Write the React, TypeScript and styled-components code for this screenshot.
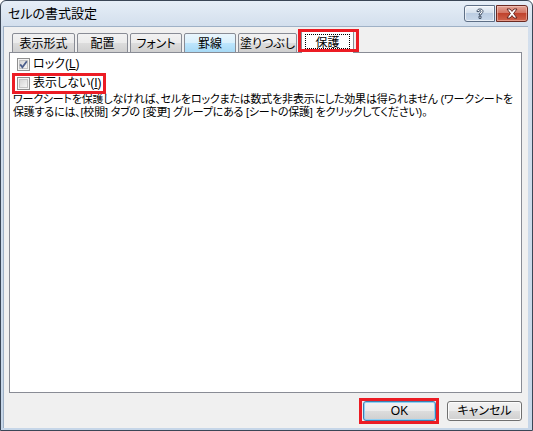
import * as React from "react"
import styled, { createGlobalStyle } from "styled-components"

const GlobalStyle = createGlobalStyle`
  html, body {
    margin: 0;
    padding: 0;
    background: #ffffff;
  }
  body {
    font-family: "Liberation Sans", "Noto Sans CJK JP", sans-serif;
    font-size: 12px;
    color: #000;
    font-feature-settings: "palt";
  }
`

interface ITab {
  label: string
  w: number
  hover?: boolean
  active?: boolean
}

const tabs: ITab[] = [
  { label: "表示形式", w: 63 },
  { label: "配置", w: 51 },
  { label: "フォント", w: 52 },
  { label: "罫線", w: 52, hover: true },
  { label: "塗りつぶし", w: 59 },
  { label: "保護", w: 53, active: true },
]

const CheckIcon = ({ checked }: { checked: boolean }) => (
  <svg width="13" height="13" viewBox="0 0 13 13">
    <defs>
      <linearGradient id="cbFill" x1="0" y1="0" x2="1" y2="1">
        <stop offset="0" stopColor="#d4d4d4" />
        <stop offset="1" stopColor="#f7f7f7" />
      </linearGradient>
    </defs>
    <rect x="0.5" y="0.5" width="12" height="12" fill="#f4f4f4" stroke="#8f8f8f" />
    <rect x="2.5" y="2.5" width="8" height="8" fill="url(#cbFill)" stroke="#c4c4c4" />
    {checked && (
      <path d="M3.2 6.4 L5.4 9.2 L9.8 3.2" fill="none" stroke="#4c5f8c" strokeWidth="1.8" />
    )}
  </svg>
)

const App: React.FunctionComponent = () => {
  return (
    <>
      <GlobalStyle />
      <Window>
        <TitleBar>
          <Title>セルの書式設定</Title>
          <Controls>
            <HelpButton>
              <svg width="10" height="12" viewBox="0 0 10 12">
                <path
                  d="M2 3.6 C2 1.6 3.4 1 5 1 C6.8 1 8 2 8 3.4 C8 5 6 5.4 6 7 L4 7 C4 5 6 4.6 6 3.5 C6 2.8 5.6 2.5 5 2.5 C4.3 2.5 4 3 4 3.6 Z M4 8.2 L6 8.2 L6 10.4 L4 10.4 Z"
                  fill="#ffffff"
                  stroke="#2c3e57"
                  strokeWidth="0.9"
                />
              </svg>
            </HelpButton>
            <CloseButton>
              <svg width="14" height="11" viewBox="0 0 14 11">
                <path
                  d="M2 1 L5 1 L7 3.4 L9 1 L12 1 L8.6 5.5 L12 10 L9 10 L7 7.6 L5 10 L2 10 L5.4 5.5 Z"
                  fill="#ffffff"
                  stroke="#5a1c16"
                  strokeWidth="0.9"
                />
              </svg>
            </CloseButton>
          </Controls>
        </TitleBar>
        <Client>
          <TabStrip>
            {tabs.map((t) => (
              <Tab key={t.label} $w={t.w} $hover={t.hover} $active={t.active}>
                {t.active ? <FocusLabel>{t.label}</FocusLabel> : t.label}
                {t.active && <Marker $l={-4} $r={-6} $t={-2} $b={1} />}
              </Tab>
            ))}
          </TabStrip>
          <Panel>
            <CheckRow>
              <CheckLabel>
                <CheckIcon checked />
                <span>
                  ロック(<u>L</u>)
                </span>
              </CheckLabel>
            </CheckRow>
            <CheckRow>
              <CheckLabel>
                <CheckIcon checked={false} />
                <span>
                  表示しない(<u>I</u>)
                </span>
                <Marker $l={-3} $r={-2} $t={-3} $b={-3} />
              </CheckLabel>
            </CheckRow>
            <Note>
              ワークシートを保護しなければ、セルをロックまたは数式を非表示にした効果は得られません (ワークシートを
              <br />
              保護するには、[校閲] タブの [変更] グループにある [シートの保護] をクリックしてください)。
            </Note>
          </Panel>
          <Footer>
            <Button $w={73} $default>
              OK
              <Marker $l={-5} $r={-4} $t={-4} $b={-4} />
            </Button>
            <Button $w={75}>キャンセル</Button>
          </Footer>
        </Client>
      </Window>
    </>
  )
}

const Window = styled.div`
  box-sizing: border-box;
  width: 533px;
  height: 431px;
  display: flex;
  flex-direction: column;
  border: 1px solid #3a4656;
  border-radius: 6px 6px 0 0;
  background: linear-gradient(#e6eef7, #d3dfed 25px, #c6d6e8);
  padding: 0 4px 2px 2px;
  overflow: hidden;
`

const TitleBar = styled.div`
  height: 25px;
  display: flex;
  align-items: flex-start;
  padding: 0 0 0 5px;
  flex-shrink: 0;
`

const Title = styled.div`
  font-family: "Noto Sans CJK JP", sans-serif;
  font-size: 13px;
  line-height: 24px;
  color: #000;
`

const Controls = styled.div`
  margin-left: auto;
  margin-top: 4px;
  display: flex;
  gap: 1px;
`

const HelpButton = styled.div`
  box-sizing: border-box;
  width: 31px;
  height: 17px;
  border: 1px solid #5e6f86;
  border-radius: 3px 0 0 3px;
  background: linear-gradient(#eef3f9, #d3dfec 50%, #bccde2 50%, #c9d8ea);
  box-shadow: inset 0 0 0 1px rgba(255, 255, 255, 0.6);
  display: flex;
  align-items: center;
  justify-content: center;
`

const CloseButton = styled.div`
  box-sizing: border-box;
  width: 32px;
  height: 17px;
  border: 1px solid #6b2a22;
  border-radius: 0 3px 3px 0;
  background: linear-gradient(#e3a597, #d2705e 50%, #c0432d 50%, #d0644c);
  box-shadow: inset 0 0 0 1px rgba(255, 220, 210, 0.45);
  display: flex;
  align-items: center;
  justify-content: center;
`

const Client = styled.div`
  flex: 1;
  display: flex;
  flex-direction: column;
  background: #f0f0f0;
  border-left: 1px solid #9fb1c6;
  border-top: 1px solid #9fb1c6;
  padding: 3px 6px 0 5px;
  min-height: 0;
`

const TabStrip = styled.div`
  height: 22px;
  display: flex;
  align-items: flex-end;
  gap: 2px;
  padding-left: 3px;
  position: relative;
  z-index: 1;
`

const Tab = styled.div<{ $w: number; $hover?: boolean; $active?: boolean }>`
  position: relative;
  box-sizing: border-box;
  width: ${(p) => p.$w}px;
  height: ${(p) => (p.$active ? 23 : 20)}px;
  margin-bottom: -1px;
  margin-left: ${(p) => (p.$active ? 2 : 0)}px;
  border: 1px solid #898c95;
  border-bottom: ${(p) => (p.$active ? "none" : "1px solid #898c95")};
  border-radius: 2px 2px 0 0;
  background: ${(p) =>
    p.$active
      ? "#ffffff"
      : p.$hover
      ? "linear-gradient(#eaf6fd, #d9f0fc 50%, #bee6fd 50%, #a7d9f5)"
      : "linear-gradient(#f2f2f2, #ebebeb 50%, #dddddd 50%, #cfcfcf)"};
  display: flex;
  align-items: center;
  justify-content: center;
  padding: ${(p) => (p.$active ? "3px 3px 4px 3px" : "0 0 1px 0")};
  font-family: "Noto Sans CJK JP", sans-serif;
  font-size: 12px;
  line-height: 14px;
`

const FocusLabel = styled.span`
  flex: 1;
  align-self: stretch;
  border: 1px dotted #000;
  display: flex;
  align-items: center;
  justify-content: center;
`

const Marker = styled.span<{ $l: number; $r: number; $t: number; $b: number }>`
  position: absolute;
  left: ${(p) => p.$l}px;
  right: ${(p) => p.$r}px;
  top: ${(p) => p.$t}px;
  bottom: ${(p) => p.$b}px;
  border: 3px solid #ec1c24;
  pointer-events: none;
`

const Panel = styled.div`
  flex: 1;
  background: #ffffff;
  border: 1px solid #898c95;
  padding: 2px 0 0 2px;
  display: flex;
  flex-direction: column;
  align-items: flex-start;
`

const CheckRow = styled.div`
  height: 19px;
  display: flex;
  align-items: center;
  padding-left: 3px;
`

const CheckLabel = styled.label`
  position: relative;
  display: inline-flex;
  align-items: center;
  gap: 3px;
  padding: 1px 2px;
  font-family: "Liberation Sans", "Noto Sans CJK JP", sans-serif;
  font-size: 12px;
  line-height: 13px;

  svg {
    display: block;
  }

  u {
    text-underline-offset: 1px;
  }
`

const Note = styled.div`
  font-family: "Liberation Sans", "Noto Sans CJK JP", sans-serif;
  font-size: 11px;
  letter-spacing: -0.2px;
  line-height: 13px;
  white-space: nowrap;
  padding-left: 1px;
`

const Footer = styled.div`
  height: 35px;
  box-sizing: border-box;
  display: flex;
  justify-content: flex-end;
  align-items: flex-start;
  gap: 11px;
  padding-top: 8px;
  flex-shrink: 0;
`

const Button = styled.div<{ $w: number; $default?: boolean }>`
  position: relative;
  box-sizing: border-box;
  width: ${(p) => p.$w}px;
  height: 20px;
  border: 1px solid ${(p) => (p.$default ? "#3c7fb1" : "#707070")};
  border-radius: 3px;
  background: linear-gradient(#f2f2f2, #ebebeb 50%, #dddddd 50%, #cfcfcf);
  box-shadow: inset 0 0 0 1px ${(p) => (p.$default ? "#8fd0f4" : "#fcfcfc")};
  display: flex;
  align-items: center;
  justify-content: center;
  font-family: "Liberation Sans", "Noto Sans CJK JP", sans-serif;
  font-size: 12px;
  line-height: 14px;
`

export default App
